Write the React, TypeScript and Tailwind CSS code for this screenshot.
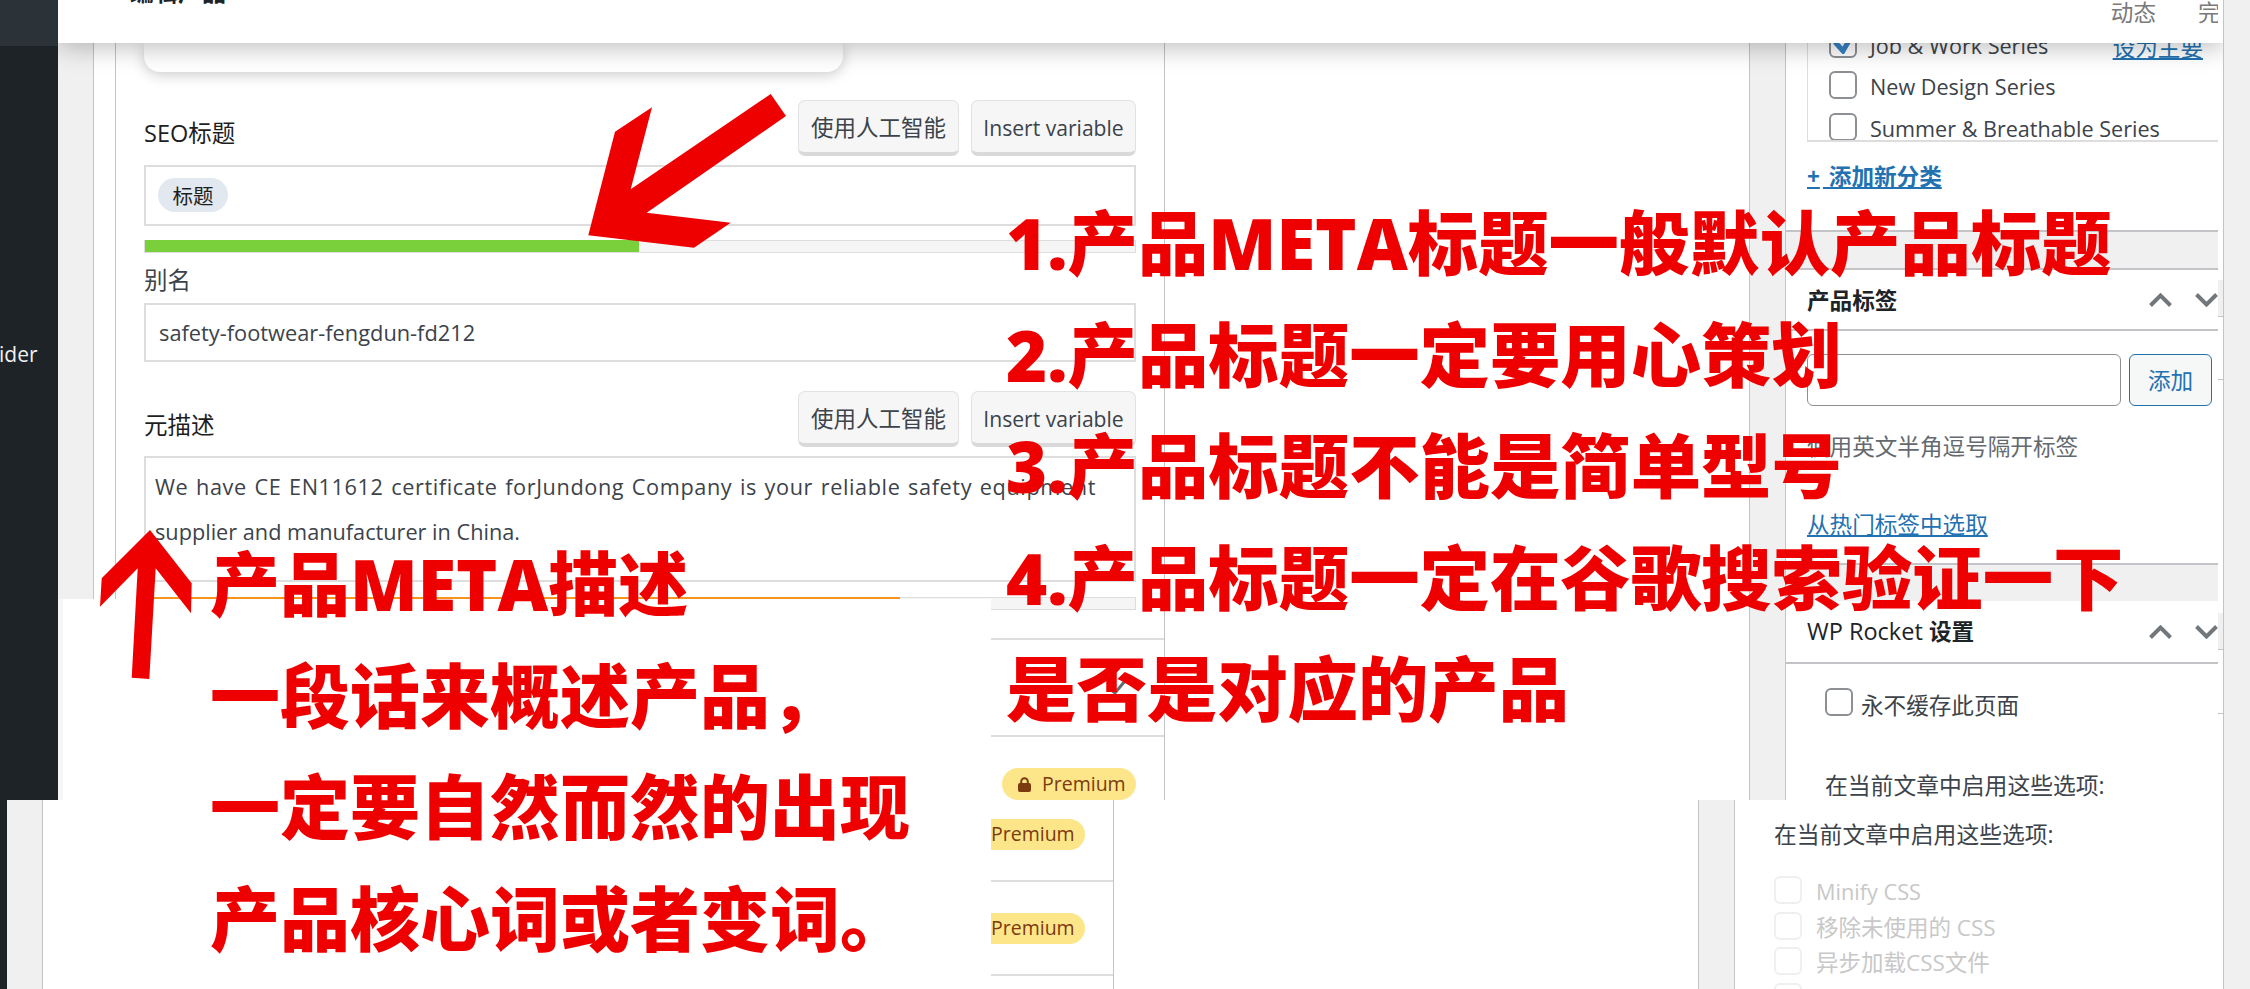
import React from "react";

const Box = ({ muted = false, checked = false }: { muted?: boolean; checked?: boolean }) => (
  <span className={`w-[28px] h-[28px] shrink-0 rounded-[6px] border-2 bg-white flex items-center justify-center ${muted ? "border-[#efefef]" : "border-[#8c8f94]"}`}>
    {checked && (
      <svg width="22" height="20" viewBox="0 0 22 20">
        <path d="M3 8 L11 17 L19 3" fill="none" stroke="#3582c4" strokeWidth="5" />
      </svg>
    )}
  </span>
);

const Btn = ({ children }: { children: React.ReactNode }) => (
  <div className="h-[56px] pt-[3px] rounded-[7px] border border-[#e2e2e2] border-b-[4px] border-b-[#d9d9d9] bg-[#f6f6f6] flex items-center justify-center text-[#3c434a] text-[22.5px]">
    {children}
  </div>
);

const Chevrons = () => (
  <div className="flex gap-[23px] items-center">
    <svg width="23" height="14" viewBox="0 0 23 14">
      <path d="M1.5 12.5 L11.5 2.5 L21.5 12.5" fill="none" stroke="#72777c" strokeWidth="4" />
    </svg>
    <svg width="23" height="14" viewBox="0 0 23 14">
      <path d="M1.5 1.5 L11.5 11.5 L21.5 1.5" fill="none" stroke="#72777c" strokeWidth="4" />
    </svg>
  </div>
);

const SeoRow = ({ label, mt, pt }: { label: string; mt: string; pt: string }) => (
  <div className={`w-[992px] flex justify-between ${mt}`}>
    <div className={`${pt} text-[#1e1e1e] text-[23.5px] leading-[32px]`}>{label}</div>
    <div className="flex gap-[12px]">
      <div className="w-[161px]"><Btn>使用人工智能</Btn></div>
      <div className="w-[165px]"><Btn><span className="text-[21.1px]">Insert variable</span></Btn></div>
    </div>
  </div>
);

const Progress = ({ fill, color, mt }: { fill: string; color: string; mt: string }) => (
  <div className={`w-[992px] h-[13px] bg-[#f5f5f5] border border-[#dddddd] flex ${mt}`}>
    <div className={`-mt-[1px] h-[12px] ${fill} ${color}`} />
  </div>
);

const PremiumPill = ({ mt }: { mt: string }) => (
  <div className={`w-[94px] h-[31px] rounded-r-full bg-[#fde68a] text-[#7c3a0f] text-[19.5px] leading-[30px] ${mt}`}>Premium</div>
);

const CatRow = ({ name, checked, link }: { name: string; checked?: boolean; link?: boolean }) => (
  <div className="h-[41.5px] pl-[21px] flex items-center text-[#3c434a] text-[21.6px]">
    <Box checked={checked} />
    <span className="ml-[13px] flex-1 translate-y-[2px]">{name}</span>
    {link && <span className="mr-[15px] translate-y-[4px] text-[#2271b1] underline text-[22.6px]">设为主要</span>}
  </div>
);

const Hdr = ({ children, h }: { children: React.ReactNode; h: string }) => (
  <div className={`${h} pl-[21px] border-b-2 border-[#c3c4c7] flex items-center justify-between text-[#1d2327] text-[22.6px] overflow-hidden`}>
    {children}
    <Chevrons />
  </div>
);

export default function App() {
  return (
    <div className="relative w-[2250px] h-[989px] overflow-hidden bg-white [font-family:'Open_Sans','Noto_Sans_CJK_SC',sans-serif]">
      {/* upper capture */}
      <div className="flex h-[800px]">
        <div className="w-[58px] shrink-0 bg-[#1d2327] flex flex-col">
          <div className="h-[46px] bg-[#2c3338]" />
          <div className="mt-[292px] text-[#f0f0f1] text-[21px] leading-[32px] -ml-[1px]">ider</div>
        </div>
        <div className="w-[2166px] shrink-0 border-r border-[#c3c4c7] flex flex-col overflow-hidden">
          <div className="relative z-10 h-[43px] shrink-0 bg-white shadow-[0_4px_26px_rgba(0,0,0,0.27)] flex justify-between">
            <div className="ml-[72px] -mt-[22px] text-[24px] leading-[28px] font-bold text-[#1d2327]">编辑产品</div>
            <div className="mr-[5px] flex gap-[42px] text-[#7a7a7a] text-[22.6px] leading-[26px]">
              <span>动态</span>
              <span className="w-[20px] overflow-hidden whitespace-nowrap">完成</span>
            </div>
          </div>
          <div className="flex flex-1 min-h-0">
            <div className="w-[36px] bg-[#f0f0f1] border-r border-[#c3c4c7]" />
            <div className="w-[22px] border-r border-[#c3c4c7]" />
            {/* editor */}
            <div className="w-[1049px] border-r border-[#c3c4c7] pl-[28px] flex flex-col">
              <div className="w-[699px] h-[29px] shrink-0 rounded-b-[16px] bg-white shadow-[0_3px_14px_rgba(0,0,0,0.2)]" />
              <SeoRow label="SEO标题" mt="mt-[28px]" pt="pt-[17px]" />
              <div className="w-[992px] h-[61px] mt-[9px] border-2 border-[#dddddd] pl-[12px] flex items-center">
                <span className="h-[34px] w-[70px] pt-[3px] rounded-full bg-[#e2e8f0] text-[#1e1e1e] text-[20.5px] flex items-center justify-center">标题</span>
              </div>
              <Progress fill="w-[494px]" color="bg-[#7ad03a]" mt="mt-[14px]" />
              <div className="h-[50px] text-[#3c434a] text-[23.5px] leading-[32px] pt-[11px]">别名</div>
              <div className="w-[992px] h-[60px] pt-[2px] border-2 border-[#dddddd] pl-[13px] flex items-center text-[#3c434a] text-[21.8px]">safety-footwear-fengdun-fd212</div>
              <SeoRow label="元描述" mt="mt-[29px]" pt="pt-[18px]" />
              <div className="w-[992px] h-[126px] mt-[9px] border-2 border-[#dddddd] pl-[9px] pt-[6px] text-[#3c434a] text-[21.7px] leading-[45px] whitespace-nowrap">
                <div className="tracking-[0.6px] [word-spacing:1.4px]">We have CE EN11612 certificate forJundong Company is your reliable safety equipment</div>
                <div>supplier and manufacturer in China.</div>
              </div>
              <Progress fill="w-[755px]" color="bg-[#f7941d]" mt="mt-[15px]" />
              <div className="h-[100px] mt-[28px] border-y-2 border-[#dddddd] flex items-center justify-end pr-[35px]">
                <svg width="22" height="20" viewBox="0 0 22 20"><path d="M3 12 L8 16 L18 4" fill="none" stroke="#646970" strokeWidth="3" /></svg>
              </div>
              <div className="ml-[858px] mt-[31px] w-[134px] h-[32px] rounded-full bg-[#fde68a] text-[#7c3a0f] text-[19.5px] flex items-center gap-[11px] pl-[16px]">
                <svg width="13" height="15" viewBox="0 0 13 15" className="shrink-0">
                  <path d="M3.2 7 V4.5 a3.3 3.3 0 0 1 6.6 0 V7" fill="none" stroke="#7c3a0f" strokeWidth="2" />
                  <rect x="0" y="6" width="13" height="9" rx="2" fill="#7c3a0f" />
                </svg>
                Premium
              </div>
            </div>
            <div className="w-[585px] border-r border-[#c3c4c7]" />
            <div className="w-[36px] bg-[#f0f0f1] border-r border-[#c3c4c7]" />
            {/* side panels */}
            <div className="w-[432px] flex flex-col bg-[#f0f0f1]">
              <div className="h-[189px] bg-white border-b-2 border-[#c3c4c7]">
                <div className="-mt-[20px] ml-[21px] h-[119px] border-l border-b-2 border-[#dddddd] overflow-hidden">
                  <CatRow name="Job & Work Series" checked link />
                  <CatRow name="New Design Series" />
                  <CatRow name="Summer & Breathable Series" />
                </div>
                <div className="ml-[21px] mt-[20px] text-[#2271b1] text-[22.6px] font-bold underline leading-[30px]"><span className="mr-[3px]">+</span> 添加新分类</div>
              </div>
              <div className="h-[36px]" />
              <div className="h-[297px] bg-white border-y-2 border-[#c3c4c7]">
                <Hdr h="h-[61px]"><span className="font-bold pt-[2px]">产品标签</span></Hdr>
                <div className="ml-[21px] mt-[23px] flex gap-[8px]">
                  <div className="w-[314px] h-[52px] rounded-[6px] border border-[#8c8f94] bg-white" />
                  <div className="w-[83px] h-[52px] pt-[2px] rounded-[6px] border border-[#2271b1] bg-[#f6f7f7] text-[#2271b1] text-[22.6px] flex items-center justify-center">添加</div>
                </div>
                <div className="ml-[21px] mt-[25px] text-[#646970] text-[22.6px] leading-[32px]">使用英文半角逗号隔开标签</div>
                <div className="ml-[21px] mt-[46px] text-[#2271b1] text-[22.6px] leading-[32px] underline">从热门标签中选取</div>
              </div>
              <div className="h-[36px]" />
              <div className="flex-1 bg-white overflow-hidden">
                <Hdr h="h-[63px]"><span className="pt-[1px]"><span className="font-medium text-[23.5px]">WP Rocket </span><span className="font-bold">设置</span></span></Hdr>
                <div className="ml-[39px] mt-[24px] flex items-start text-[#3c434a] text-[22.6px]">
                  <Box />
                  <span className="ml-[8px] mt-[2px] leading-[32px]">永不缓存此页面</span>
                </div>
                <div className="ml-[39px] mt-[48px] text-[#3c434a] text-[22.8px] leading-[32px]">在当前文章中启用这些选项:</div>
              </div>
            </div>
            <div className="w-[5px] flex flex-col">
              <div className="mt-[237px] h-[37px] bg-[#f0f0f1] border-b border-[#c3c4c7]" />
              <div className="mt-[62px] h-[1px] bg-[#c3c4c7]" />
              <div className="mt-[233px] h-[37px] bg-[#f0f0f1] border-b border-[#c3c4c7]" />
              <div className="mt-[63px] h-[1px] bg-[#c3c4c7]" />
            </div>
          </div>
        </div>
        <div className="flex-1 bg-[#f0f0f1]" />
      </div>

      {/* lower capture */}
      <div className="flex h-[189px]">
        <div className="w-[7px] bg-[#1d2327]" />
        <div className="w-[36px] bg-[#f0f0f1] border-r border-[#c3c4c7]" />
        <div className="w-[948px]" />
        <div className="w-[123px] border-r border-[#c3c4c7] flex flex-col">
          <div className="h-[82px] border-b-2 border-[#dddddd]"><PremiumPill mt="mt-[19px]" /></div>
          <div className="h-[94px] border-b-2 border-[#dddddd]"><PremiumPill mt="mt-[31px]" /></div>
        </div>
        <div className="w-[585px] border-r border-[#c3c4c7]" />
        <div className="w-[36px] bg-[#f0f0f1] border-r border-[#c3c4c7]" />
        <div className="w-[489px] border-r border-[#c3c4c7] pl-[39px]">
          <div className="mt-[19px] text-[#3c434a] text-[22.8px] leading-[32px]">在当前文章中启用这些选项:</div>
          <div className="mt-[25px] flex flex-col gap-[7.5px] text-[#c8c8c8]">
            <div className="flex items-center h-[28px] text-[21.7px]"><Box muted /><span className="ml-[14px] pt-[4px]">Minify CSS</span></div>
            <div className="flex items-center h-[28px] text-[22.5px]"><Box muted /><span className="ml-[14px] pt-[4px]">移除未使用的 CSS</span></div>
            <div className="flex items-center h-[28px] text-[22.5px]"><Box muted /><span className="ml-[14px] pt-[4px]">异步加载CSS文件</span></div>
            <div className="flex items-center h-[28px]"><Box muted /></div>
          </div>
        </div>
        <div className="flex-1 bg-[#f0f0f1]" />
      </div>

      {/* pasted white patch */}
      <div className="absolute left-[58px] top-[599px] w-[933px] h-[201px] bg-white border-l-[5px] border-[#f6f6f7]" />

      {/* annotations */}
      <svg className="absolute left-0 top-0 pointer-events-none" width="2250" height="989">
        <polygon fill="#ee0000" points="770.7,94 786,116 646.7,212.7 730.7,222.7 694,247.7 588.3,235.3 615,131.7 652,107.3 630.7,189.3" />
        <polygon fill="#ee0000" points="150,530 191.7,583.3 191,613.3 155.7,568.3 149.3,679 131.7,677.7 137.7,568.3 100,606.7 101.7,578.3" />
      </svg>
      <div className="absolute left-[1006px] top-[188px] text-[70.4px] leading-[111.5px] font-black text-[#ee0000] whitespace-nowrap">
        <div>1.产品META标题一般默认产品标题</div>
        <div>2.产品标题一定要用心策划</div>
        <div>3.产品标题不能是简单型号</div>
        <div>4.产品标题一定在谷歌搜索验证一下</div>
        <div>是否是对应的产品</div>
      </div>
      <div className="absolute left-[210px] top-[529px] text-[70px] leading-[111.5px] font-black text-[#ee0000] whitespace-nowrap">
        <div>产品META描述</div>
        <div>一段话来概述产品，</div>
        <div>一定要自然而然的出现</div>
        <div>产品核心词或者变词。</div>
      </div>
    </div>
  );
}
